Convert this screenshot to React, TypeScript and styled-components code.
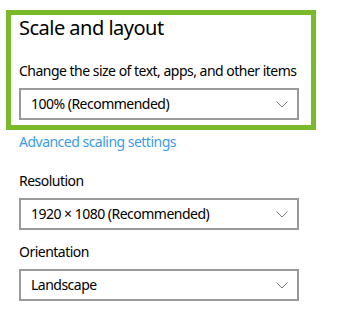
import styled, { createGlobalStyle } from "styled-components";

const GlobalStyle = createGlobalStyle`
  body {
    margin: 0;
    background: #ffffff;
    font-family: "Noto Sans", "Open Sans", sans-serif;
    letter-spacing: -0.032em;
    color: #000000;
  }
`;

const Page = styled.div`
  width: 350px;
  height: 321px;
  padding-top: 10px;
  box-sizing: border-box;
`;

// highlighted group
const Highlight = styled.section`
  width: 310px;
  margin-left: 6px;
  border: 5px solid #7ab929;
  box-sizing: border-box;
  padding: 0 0 5px 8px;
`;

const Title = styled.h2`
  margin: 0;
  font-size: 20px;
  line-height: 26px;
  font-weight: 400;
`;

const Body = styled.div`
  padding-left: 19px;
`;

const Label = styled.div<{ $top: number }>`
  margin-top: ${(p) => p.$top}px;
  font-size: 14px;
  line-height: 20px;
  white-space: nowrap;
`;

const Link = styled.a`
  display: block;
  margin-top: 2px;
  font-size: 14px;
  line-height: 20px;
  color: #3d9be6;
  text-decoration: none;
  cursor: pointer;
`;

const Select = styled.div`
  margin-top: 7px;
  width: 280px;
  height: 32px;
  box-sizing: border-box;
  border: 2px solid #999999;
  display: flex;
  align-items: center;
  justify-content: space-between;
  padding: 0 9px 0 10px;
  font-size: 14px;
  line-height: 20px;
`;

const Chevron = () => (
  <svg width="12" height="7" viewBox="0 0 12 7">
    <polyline points="0.5,0.5 6,6 11.5,0.5" fill="none" stroke="#7a7a7a" strokeWidth="1" />
  </svg>
);

const Dropdown = ({ value }: { value: string }) => (
  <Select>
    <span>{value}</span>
    <Chevron />
  </Select>
);

export default function App() {
  return (
    <Page>
      <GlobalStyle />
      <Highlight>
        <Title>Scale and layout</Title>
        <Label $top={20}>Change the size of text, apps, and other items</Label>
        <Dropdown value="100% (Recommended)" />
      </Highlight>
      <Body>
        <Link>Advanced scaling settings</Link>
        <Label $top={19}>Resolution</Label>
        <Dropdown value="1920 × 1080 (Recommended)" />
        <Label $top={12}>Orientation</Label>
        <Dropdown value="Landscape" />
      </Body>
    </Page>
  );
}
